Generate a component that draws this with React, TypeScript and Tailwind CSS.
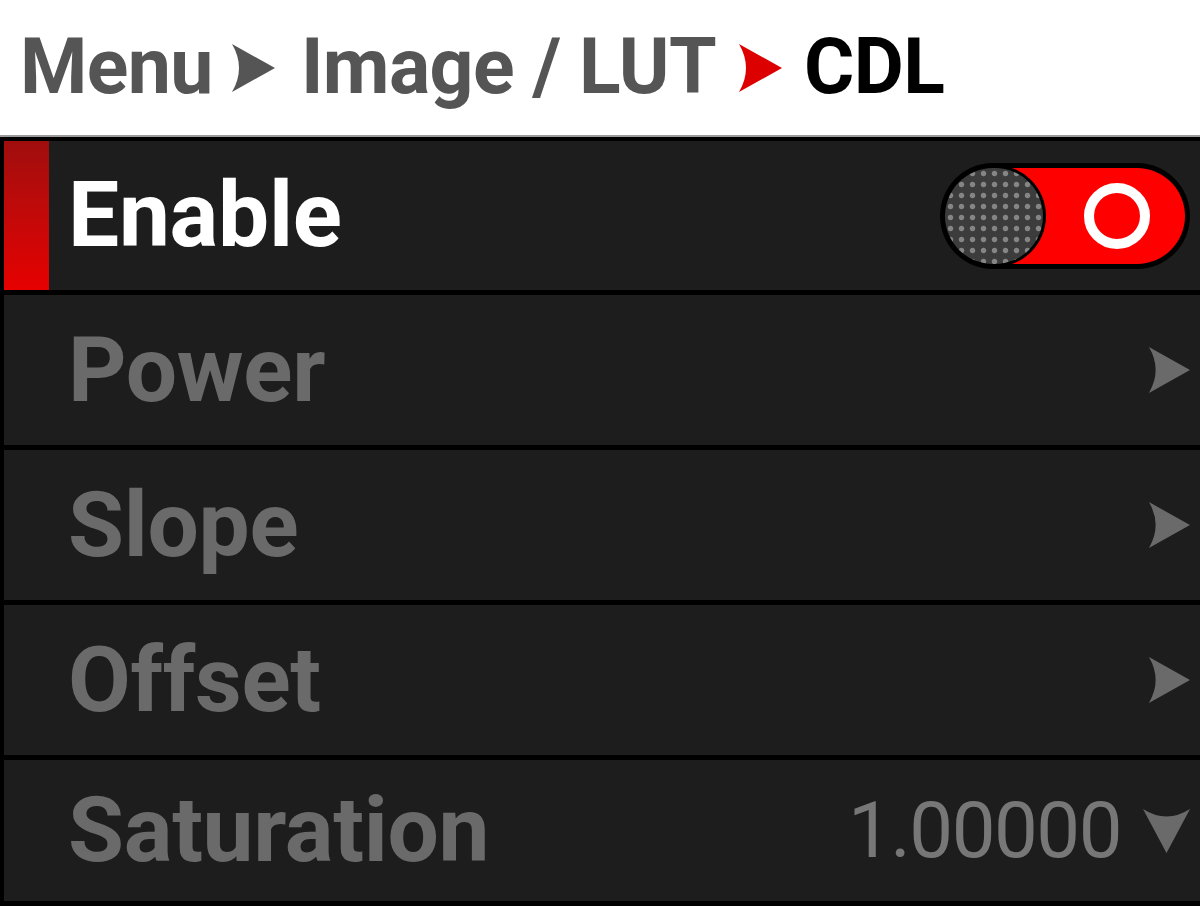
import React from "react";

const Arrow = ({ color, className }: { color: string; className?: string }) => (
  <svg viewBox="0 0 44 50" className={className}>
    <path d="M1 1 L44 25 L1 49 Q15 25 1 1 Z" fill={color} />
  </svg>
);

const DownArrow = ({ color, className }: { color: string; className?: string }) => (
  <svg viewBox="0 0 47 45" className={className}>
    <path d="M0 1 Q23.5 16 47 1 L23.5 45 Z" fill={color} />
  </svg>
);

const Row = ({
  label,
  h,
  children,
}: {
  label: string;
  h: string;
  children?: React.ReactNode;
}) => (
  <div className={`flex items-center bg-[#1d1d1d] pl-[64px] pr-[10px] ${h}`}>
    <span className="flex-1 text-[91px] font-bold leading-none text-[#6a6a6a] tracking-[-0.3px]">
      {label}
    </span>
    {children}
  </div>
);

export default function App() {
  return (
    <div className="w-[1200px] h-[906px] bg-black flex flex-col font-['Roboto',sans-serif] overflow-hidden">
      <div className="h-[135px] bg-white flex items-center pl-[20px]">
        <span className="text-[77px] font-bold leading-none text-[#555555] tracking-[-0.6px]">Menu</span>
        <Arrow color="#555555" className="w-[44px] h-[50px] ml-[18px] mr-[26px]" />
        <span className="text-[77px] font-bold leading-none text-[#555555] tracking-[-0.6px]">Image / LUT</span>
        <Arrow color="#dd0000" className="w-[44px] h-[50px] ml-[22px] mr-[22px]" />
        <span className="text-[77px] font-bold leading-none text-black tracking-[-0.6px]">CDL</span>
      </div>
      <div className="h-[2px] bg-[#9a9a9a]" />
      <div className="flex-1 bg-black pl-[4px] pt-[4px] pb-[5px] flex flex-col gap-[5px]">
        <div className="h-[149px] flex items-center bg-[#1d1d1d] pr-[10px]">
          <div className="w-[45px] self-stretch bg-gradient-to-b from-[#a00d0d] to-[#e60000]" />
          <span className="flex-1 ml-[19px] text-[91px] font-bold leading-none text-white tracking-[-0.3px]">
            Enable
          </span>
          <div className="w-[250px] h-[106px] rounded-full bg-black p-[5px]">
            <div className="relative w-full h-full rounded-full bg-[#ff0000]">
              <div className="absolute left-0 top-0 w-[98px] h-[96px] rounded-full bg-[#3c3c3c] bg-[radial-gradient(circle,#858585_2.2px,transparent_3.2px)] bg-[length:11px_11px] ring-[3px] ring-black" />
              <div className="absolute right-[35px] top-[15px] w-[66px] h-[66px] rounded-full border-[10px] border-white" />
            </div>
          </div>
        </div>
        <Row label="Power" h="h-[150px]">
          <Arrow color="#6a6a6a" className="w-[42px] h-[48px]" />
        </Row>
        <Row label="Slope" h="h-[150px]">
          <Arrow color="#6a6a6a" className="w-[42px] h-[48px]" />
        </Row>
        <Row label="Offset" h="h-[150px]">
          <Arrow color="#6a6a6a" className="w-[42px] h-[48px]" />
        </Row>
        <Row label="Saturation" h="flex-1">
          <span className="text-[78px] font-normal leading-none text-[#777777] mr-[22px] tracking-[-1.5px]">
            1.00000
          </span>
          <DownArrow color="#6a6a6a" className="w-[47px] h-[45px]" />
        </Row>
      </div>
    </div>
  );
}
